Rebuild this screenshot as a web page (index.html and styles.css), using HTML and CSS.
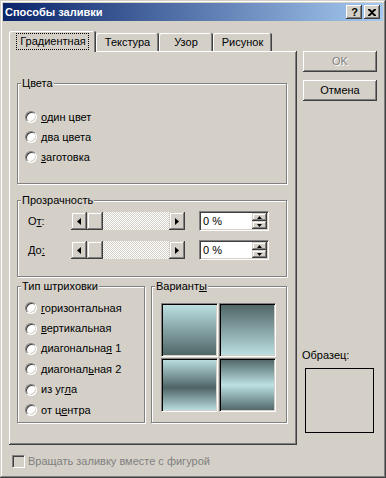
FILE: index.html
```html
<!DOCTYPE html>
<html lang="ru">
<head>
<meta charset="utf-8">
<title>Способы заливки</title>
<link rel="stylesheet" href="styles.css">
</head>
<body>
<div class="window">
  <div class="titlebar">
    <span class="title">Способы заливки</span>
    <div class="tb-btns">
      <span class="tbtn help">?</span>
      <span class="tbtn close"><svg width="8" height="7" viewBox="0 0 8 7"><path d="M0 0h2l2 2 2-2h2v1L5 3.5 8 6v1H6L4 5 2 7H0V6l3-2.5L0 1z" fill="#000"/></svg></span>
    </div>
  </div>
  <div class="content">
    <div class="main">
      <div class="left">
        <div class="tabs">
          <div class="tab sel"><span class="focus">Градиентная</span></div>
          <div class="tab t2">Текстура</div>
          <div class="tab t3">Узор</div>
          <div class="tab t4">Рисунок</div>
        </div>
        <div class="panel">
          <div class="group colors">
            <span class="glabel">Цвета</span>
            <div class="opt"><span class="radio"></span><span><u>о</u>дин цвет</span></div>
            <div class="opt"><span class="radio"></span><span><u>д</u>ва цвета</span></div>
            <div class="opt"><span class="radio"></span><span><u>з</u>аготовка</span></div>
          </div>
          <div class="group transp">
            <span class="glabel">Прозрачность</span>
            <div class="trow">
              <span class="tlabel">О<u>т</u>:</span>
              <div class="scroll">
                <div class="sbtn"><svg width="4" height="7" viewBox="0 0 4 7"><path d="M4 0v7L0 3.5z" fill="#000"/></svg></div>
                <div class="thumb"></div>
                <div class="track"></div>
                <div class="sbtn"><svg width="4" height="7" viewBox="0 0 4 7"><path d="M0 0v7l4-3.5z" fill="#000"/></svg></div>
              </div>
              <div class="edit"><span class="val">0 %</span>
                <div class="spin">
                  <div class="sp"><svg width="5" height="3" viewBox="0 0 5 3"><path d="M2.5 0L5 3H0z" fill="#000"/></svg></div>
                  <div class="sp"><svg width="5" height="3" viewBox="0 0 5 3"><path d="M0 0h5L2.5 3z" fill="#000"/></svg></div>
                </div>
              </div>
            </div>
            <div class="trow">
              <span class="tlabel">До<u>:</u></span>
              <div class="scroll">
                <div class="sbtn"><svg width="4" height="7" viewBox="0 0 4 7"><path d="M4 0v7L0 3.5z" fill="#000"/></svg></div>
                <div class="thumb"></div>
                <div class="track"></div>
                <div class="sbtn"><svg width="4" height="7" viewBox="0 0 4 7"><path d="M0 0v7l4-3.5z" fill="#000"/></svg></div>
              </div>
              <div class="edit"><span class="val">0 %</span>
                <div class="spin">
                  <div class="sp"><svg width="5" height="3" viewBox="0 0 5 3"><path d="M2.5 0L5 3H0z" fill="#000"/></svg></div>
                  <div class="sp"><svg width="5" height="3" viewBox="0 0 5 3"><path d="M0 0h5L2.5 3z" fill="#000"/></svg></div>
                </div>
              </div>
            </div>
          </div>
          <div class="brow">
            <div class="group hatch">
              <span class="glabel">Тип штриховки</span>
              <div class="opt"><span class="radio"></span><span><u>г</u>оризонтальная</span></div>
              <div class="opt"><span class="radio"></span><span><u>в</u>ертикальная</span></div>
              <div class="opt"><span class="radio"></span><span>диагональна<u>я</u> 1</span></div>
              <div class="opt"><span class="radio"></span><span>диагонал<u>ь</u>ная 2</span></div>
              <div class="opt"><span class="radio"></span><span>из уг<u>л</u>а</span></div>
              <div class="opt"><span class="radio"></span><span>от ц<u>е</u>нтра</span></div>
            </div>
            <div class="group variants">
              <span class="glabel">Вариант<u>ы</u></span>
              <div class="swatches">
                <div class="sw g1"></div>
                <div class="sw g2"></div>
                <div class="sw g3"></div>
                <div class="sw g4"></div>
              </div>
            </div>
          </div>
        </div>
      </div>
      <div class="right">
        <div class="btn disabled">OK</div>
        <div class="btn">Отмена</div>
        <div class="sample">
          <div class="slabel">Образец:</div>
          <div class="sbox"></div>
        </div>
      </div>
    </div>
    <div class="bottom">
      <span class="check"></span>
      <span class="dtext">Вращать заливку вместе с фигурой</span>
    </div>
  </div>
</div>
</body>
</html>
```
FILE: styles.css
```css
* { box-sizing: border-box; margin: 0; padding: 0; }
html, body { width: 386px; height: 478px; overflow: hidden; }
body {
  font-family: "Liberation Sans", Arial, sans-serif;
  font-size: 11px;
  line-height: 13px;
  color: #000;
  background: #d4d0c8;
}
u { text-decoration: underline; text-underline-offset: 1px; }

.window {
  width: 386px;
  height: 478px;
  padding: 3px;
  background: #d4d0c8;
  box-shadow: inset -1px -1px #404040, inset 1px 1px #d4d0c8, inset -2px -2px #808080, inset 2px 2px #fff;
  display: flex;
  flex-direction: column;
}

.titlebar {
  height: 18px;
  flex: none;
  background: linear-gradient(to right, #0a246a, #a6caf0);
  display: flex;
  align-items: center;
  padding: 0 3px 0 2px;
}
.title { flex: 1; color: #fff; font-weight: bold; font-size: 11px; }
.tb-btns { display: flex; gap: 2px; }
.tbtn {
  width: 16px;
  height: 14px;
  background: #d4d0c8;
  box-shadow: inset -1px -1px #404040, inset 1px 1px #fff, inset -2px -2px #808080;
  display: flex;
  align-items: center;
  justify-content: center;
}
.help { font-weight: bold; font-size: 11px; line-height: 12px; padding-left: 1px; }
.close svg { display: block; margin-left: 0; }

.content {
  flex: 1;
  display: flex;
  flex-direction: column;
  padding: 10px 6px 0 6px;
}
.main { display: flex; gap: 6px; }
.left { width: 288px; display: flex; flex-direction: column; }

.tabs { display: flex; height: 20px; align-items: flex-end; position: relative; z-index: 1; }
.tab {
  height: 18px;
  background: #d4d0c8;
  border-radius: 2px 2px 0 0;
  box-shadow: inset -1px 0 #404040, inset 1px 1px #fff, inset -2px 0 #808080;
  display: flex;
  align-items: center;
  justify-content: center;
  padding-top: 1px;
}
.tab.sel { height: 21px; width: 87px; margin-bottom: -1px; padding-bottom: 2px; }
.t2 { width: 63px; }
.t3 { width: 54px; }
.t4 { width: 59px; }
.focus { outline: 1px dotted #000; padding: 1px 2px 1px 3px; }

.panel {
  height: 394px;
  background: #d4d0c8;
  box-shadow: inset -1px -1px #404040, inset 1px 1px #fff, inset -2px -2px #808080;
  padding: 32px 10px 0 8px;
}

.group {
  position: relative;
  border: 1px solid #808080;
  box-shadow: 1px 1px 0 #fff, inset 1px 1px 0 #fff;
}
.glabel {
  position: absolute;
  top: -7px;
  left: 3px;
  padding: 0 1px;
  background: #d4d0c8;
}
.colors { height: 101px; padding: 23px 0 0 7px; }
.opt { height: 20px; display: flex; align-items: center; gap: 4px; }
.hatch .opt { height: 20.4px; }
.radio {
  width: 12px;
  height: 12px;
  flex: none;
  border-radius: 50%;
  background: #fff;
  border: 1px solid;
  border-color: #808080 #fff #fff #808080;
  box-shadow: inset 1px 1px #404040, inset -1px -1px #d4d0c8;
}

.transp { margin-top: 16px; height: 77px; padding: 10px 0 0 10px; display: flex; flex-direction: column; gap: 9px; }
.trow { height: 20px; display: flex; align-items: center; }
.tlabel { width: 43px; }
.scroll { width: 114px; height: 18px; display: flex; }
.sbtn {
  width: 16px;
  height: 18px;
  background: #d4d0c8;
  box-shadow: inset -1px -1px #404040, inset 1px 1px #d4d0c8, inset -2px -2px #808080, inset 2px 2px #fff;
  display: flex;
  align-items: center;
  justify-content: center;
}
.thumb {
  width: 16px;
  height: 18px;
  background: #d4d0c8;
  box-shadow: inset -1px -1px #404040, inset 1px 1px #d4d0c8, inset -2px -2px #808080, inset 2px 2px #fff;
}
.track {
  flex: 1;
  background: repeating-conic-gradient(#fff 0 25%, #d4d0c8 0 50%) 0 0 / 2px 2px;
}
.edit {
  margin-left: 14px;
  width: 70px;
  height: 20px;
  background: #fff;
  border: 1px solid;
  border-color: #808080 #fff #fff #808080;
  box-shadow: inset 1px 1px #404040, inset -1px -1px #d4d0c8;
  padding: 1px;
  display: flex;
  align-items: center;
}
.val { flex: 1; padding-left: 2px; }
.spin { width: 15px; height: 16px; display: flex; flex-direction: column; }
.sp {
  height: 8px;
  background: #d4d0c8;
  box-shadow: inset -1px -1px #404040, inset 1px 1px #d4d0c8, inset -2px -2px #808080, inset 2px 2px #fff;
  display: flex;
  align-items: center;
  justify-content: center;
}
.sp svg { display: block; }

.brow { margin-top: 9px; height: 137px; display: flex; gap: 6px; }
.hatch { width: 128px; padding: 11px 0 0 7px; }
.variants { flex: 1; padding: 16px 0 0 9px; }
.swatches { display: grid; grid-template-columns: 57px 57px; grid-template-rows: 54px 54px; gap: 1px; }
.sw {
  border: 1px solid;
  border-color: #808080 #fff #fff #808080;
  position: relative;
}
.sw::before {
  content: "";
  position: absolute;
  inset: 0;
  box-shadow: inset 1px 1px #000, inset -1px -1px #d4d0c8;
}
.g1 { background: linear-gradient(#bde1e3, #4e6465); }
.g2 { background: linear-gradient(#4e6465, #bde1e3); }
.g3 { background: linear-gradient(#bde1e3, #4e6465 55%, #bde1e3); }
.g4 { background: linear-gradient(#4e6465, #bde1e3 50%, #4e6465); }

.right { width: 74px; display: flex; flex-direction: column; padding-top: 20px; }
.btn {
  height: 21px;
  background: #d4d0c8;
  box-shadow: inset -1px -1px #404040, inset 1px 1px #fff, inset -2px -2px #808080;
  display: flex;
  align-items: center;
  justify-content: center;
  margin-bottom: 8px;
}
.btn.disabled { color: #808080; text-shadow: 1px 1px 0 #fff; }
.sample { margin-top: auto; margin-bottom: 12px; }
.slabel { margin-left: -1px; margin-bottom: 6px; }
.sbox { margin-left: 2px; width: 69px; height: 65px; border: 1px solid #000; }

.bottom { margin-top: 10px; display: flex; align-items: center; gap: 3px; padding-left: 3px; }
.check {
  width: 13px;
  height: 13px;
  border: 1px solid;
  border-color: #808080 #fff #fff #808080;
  box-shadow: inset 1px 1px #404040, inset -1px -1px #d4d0c8;
}
.dtext { color: #808080; }
```
